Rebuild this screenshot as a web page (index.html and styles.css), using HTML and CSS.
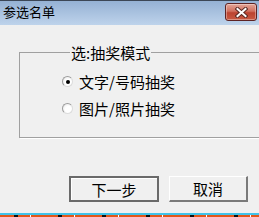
FILE: index.html
```html
<!DOCTYPE html>
<html lang="zh-CN">
<head>
  <meta charset="UTF-8">
  <title>参选名单</title>
  <link rel="stylesheet" href="styles.css">
</head>
<body>
  <div class="window">
    <div class="titlebar">
      <span class="title">参选名单</span>
      <button class="close-btn" title="关闭">
        <svg width="13" height="11" viewBox="0 0 13 11">
          <path d="M2.5 2 L10.5 9 M10.5 2 L2.5 9" stroke="#5b2a24" stroke-width="4" stroke-linecap="square"/>
          <path d="M2.5 2 L10.5 9 M10.5 2 L2.5 9" stroke="#ffffff" stroke-width="2" stroke-linecap="square"/>
        </svg>
      </button>
    </div>

    <div class="content">
      <fieldset class="group">
        <legend>选:抽奖模式</legend>
        <label class="radio-row">
          <span class="radio checked"></span>
          <span>文字/号码抽奖</span>
        </label>
        <label class="radio-row">
          <span class="radio"></span>
          <span>图片/照片抽奖</span>
        </label>
      </fieldset>

      <div class="actions">
        <button class="btn btn-default">下一步</button>
        <button class="btn btn-cancel">取消</button>
      </div>
    </div>

    <div class="taskbar-edge"></div>
  </div>
</body>
</html>
```

FILE: styles.css
```css
body {
  margin: 0;
  padding: 0;
  background-color: #f0f0f0;
  font-family: "Noto Sans CJK SC", "Noto Sans", sans-serif;
  color: #000;
}
.window {
  width: 259px;
  height: 217px;
  display: flex;
  flex-direction: column;
  overflow: hidden;
}
.titlebar {
  height: 24px;
  border-top: 1px solid #3c4656;
  background: linear-gradient(#95b1d4, #bed3eb);
  display: flex;
  align-items: center;
  justify-content: space-between;
  padding: 0 2px 0 3px;
}
.title {
  font-size: 13px;
  line-height: 16px;
  margin-top: -2px;
}
.close-btn {
  width: 32px;
  height: 18px;
  margin-top: -2px;
  padding: 0;
  border: 1px solid #5e2323;
  border-radius: 3px;
  background: linear-gradient(#e4a699 0%, #d1705f 45%, #bb4330 55%, #c95a43 100%);
  box-shadow: inset 0 0 0 1px rgba(255, 255, 255, 0.35);
  display: flex;
  align-items: center;
  justify-content: center;
}
.content {
  flex: 1;
  display: flex;
  flex-direction: column;
  padding: 0 11px 0 19px;
}
.group {
  width: 217px;
  height: 85px;
  margin: 19px 0 0 0;
  padding: 7px 0 0 42px;
  border: 1px solid #a0a0a0;
  box-shadow: 1px 1px 0 #ffffff;
  font-size: 15px;
}
.group legend {
  margin-left: 8px;
  padding: 0 1px;
  line-height: 17px;
  font-size: 15px;
}
.radio-row {
  height: 27px;
  display: flex;
  align-items: center;
  gap: 6px;
}
.radio {
  width: 9px;
  height: 9px;
  border: 1px solid #9c9c9c;
  border-bottom-color: #dcdcdc;
  border-right-color: #dcdcdc;
  border-radius: 50%;
  background: radial-gradient(circle at 60% 60%, #ffffff 40%, #e2e2e2 100%);
  position: relative;
}
.radio.checked::after {
  content: "";
  position: absolute;
  left: 2.5px;
  top: 2.5px;
  width: 4px;
  height: 4px;
  border-radius: 50%;
  background: #000;
}
.actions {
  display: flex;
  justify-content: flex-end;
  gap: 10px;
  margin-top: 38px;
}
.btn {
  height: 26px;
  padding: 0;
  font-family: "Noto Sans CJK SC", "Noto Sans", sans-serif;
  font-size: 15px;
  background: #f0f0f0;
  color: #000;
}
.btn-default {
  width: 90px;
  border: 2px solid #6a6a6a;
  box-shadow: inset 1px 1px 0 #ffffff;
}
.btn-cancel {
  width: 79px;
  border: 1px solid #ffffff;
  border-right: 2px solid #7a7a7a;
  border-bottom: 2px solid #7a7a7a;
}
.taskbar-edge {
  height: 4px;
  border-top: 2px solid #3fc3ea;
  box-sizing: border-box;
  background: repeating-linear-gradient(90deg, #e2561a 0 14px, #111 14px 18px, #e2561a 18px 30px, #fff 30px 31px, #e2561a 31px 44px);
}
```
